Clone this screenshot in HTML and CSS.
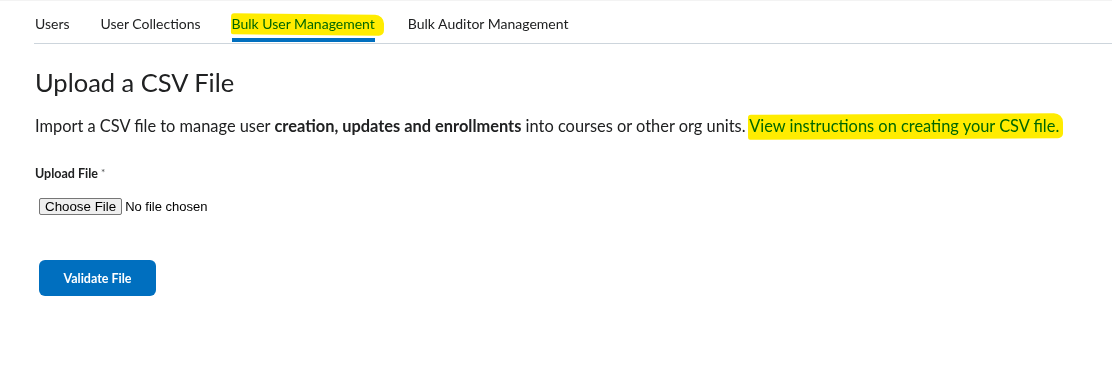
FILE: index.html
```html
<!DOCTYPE html>
<html lang="en">
  <head>
    <meta charset="UTF-8" />
    <meta name="viewport" content="width=device-width, initial-scale=1.0" />
    <title>Bulk User Management</title>
    <link rel="stylesheet" href="styles.css">
  </head>
  <body>
    <div class="topbar"></div>
    <nav class="tabs">
      <a href="#" class="tab">Users</a>
      <a href="#" class="tab">User Collections</a>
      <a href="#" class="tab tab-active"><span class="marker marker-tab">Bulk User Management</span></a>
      <a href="#" class="tab">Bulk Auditor Management</a>
    </nav>
    <main class="page">
      <h1 class="page-title">Upload a CSV File</h1>
      <p class="intro">
        Import a CSV file to manage user <strong>creation, updates and enrollments</strong> into courses or other org units.
        <a href="#" class="help-link"><span class="marker marker-link">View instructions on creating your CSV file.</span></a>
      </p>
      <form class="upload-form">
        <div class="form-group">
          <label for="csvFile">Upload File<span class="required">*</span></label>
          <input type="file" id="csvFile" name="csvFile" />
        </div>
        <button type="submit" class="validate-button">Validate File</button>
      </form>
    </main>
  </body>
</html>
```

FILE: styles.css
```css
body {
  font-family: Lato, "Open Sans", Arial, sans-serif;
  background-color: white;
  color: #202122;
  margin: 0;
  padding: 0;
}
.topbar {
  height: 1px;
  background-color: #f3f3f3;
}
.tabs {
  display: flex;
  gap: 31px;
  margin-left: 34px;
  padding-left: 1px;
  border-bottom: 1px solid #cdd5dc;
  height: 43px;
  box-sizing: border-box;
}
.tab {
  display: flex;
  align-items: center;
  padding-top: 7px;
  font-size: 14px;
  color: #202122;
  text-decoration: none;
  border-bottom: 4px solid transparent;
  height: 41px;
  box-sizing: border-box;
}
.tab:last-child {
  margin-left: 2px;
}
.tab-active {
  color: #006fbf;
  border-bottom-color: #006fbf;
}
.marker {
  position: relative;
  white-space: nowrap;
}
.marker::after {
  content: "";
  position: absolute;
  background-color: #ffec00;
  mix-blend-mode: multiply;
  border-radius: 3px 9px 5px 2px;
}
.marker-tab::after {
  left: -1px;
  right: -9px;
  top: -1px;
  bottom: -3px;
  transform: rotate(0.6deg);
}
.marker-link::after {
  left: -1px;
  right: -4px;
  top: -2px;
  bottom: -4px;
  transform: rotate(-0.3deg);
}
.page {
  padding: 0 35px;
}
.page-title {
  font-size: 25.5px;
  font-weight: 400;
  margin: 22px 0 0;
  line-height: 32px;
}
.intro {
  font-size: 16.4px;
  margin: 16px 0 0;
  line-height: 24px;
}
.intro strong {
  font-weight: 700;
}
.help-link {
  color: #006fbf;
  text-decoration: none;
}
.form-group {
  margin-top: 28px;
}
.form-group label {
  display: block;
  font-size: 12.5px;
  font-weight: 700;
  margin-bottom: 14px;
}
.required {
  color: #494c4e;
  font-size: 10px;
  font-weight: 400;
  vertical-align: top;
  margin-left: 3px;
}
.form-group input {
  margin-left: 4px;
  font-family: "Liberation Sans", Arial, sans-serif;
  font-size: 13px;
  color: black;
}
.form-group input::file-selector-button {
  font-family: "Liberation Sans", Arial, sans-serif;
  font-size: 13.33px;
  padding: 0 5px;
  height: 17px;
  margin-right: 3px;
  border: 1px solid #767676;
  border-radius: 2px;
  background-color: #efefef;
  color: black;
}
.validate-button {
  display: block;
  margin: 45px 0 0 4px;
  width: 117px;
  height: 36px;
  background-color: #006fbf;
  color: white;
  border: none;
  border-radius: 6px;
  font-family: Lato, "Open Sans", Arial, sans-serif;
  font-size: 12.5px;
  font-weight: 700;
  cursor: pointer;
}
```
